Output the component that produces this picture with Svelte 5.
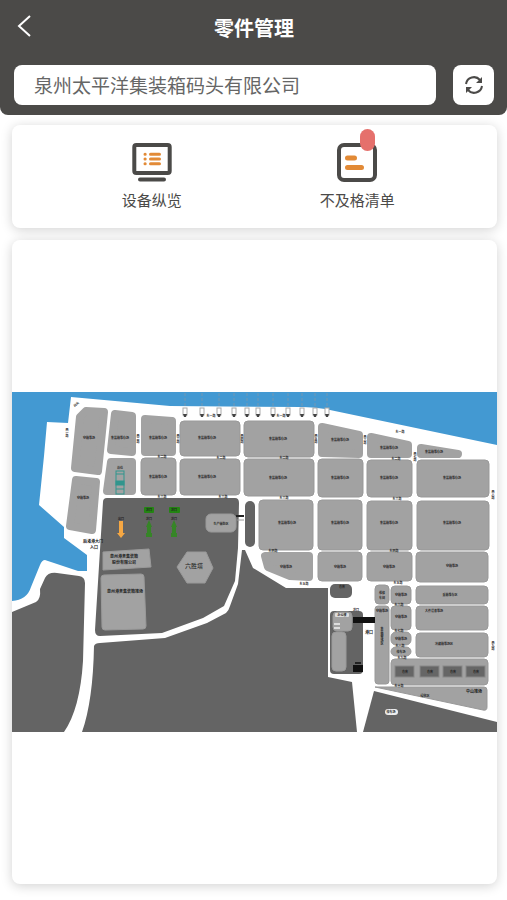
<script>
	let company = '泉州太平洋集装箱码头有限公司';

	// x, y, width, height, corner
	const yards = [
		[141, 457, 35, 37, 4],
		[180, 420, 60, 35, 4],
		[244, 420, 70, 36, 4],
		[180, 458, 60, 36, 4],
		[244, 458, 70, 37, 4],
		[318, 458, 45, 38, 4],
		[367, 459, 45, 37, 4],
		[417, 459, 72, 37, 4],
		[259, 499, 54, 50, 4],
		[318, 499, 44, 50, 4],
		[367, 500, 45, 49, 4],
		[417, 500, 72, 49, 4],
		[318, 551, 44, 29, 4],
		[367, 551, 45, 29, 4],
		[416, 551, 72, 30, 4],
		[375, 584, 14, 19, 4],
		[391, 585, 20, 18, 4],
		[416, 585, 72, 18, 4],
		[375, 605, 14, 78, 3],
		[391, 605, 20, 24, 4],
		[416, 605, 72, 24, 4],
		[391, 631, 20, 13, 5],
		[391, 646, 20, 9, 5],
		[416, 632, 72, 24, 4],
		[391, 658, 97, 26, 4],
		[206, 513, 30, 18, 5]
	];

	// drawn with a thick round stroke, so each lies inside its outline
	const corners = [
		'86,410 104,411 98,470 75,467 80,416',
		'115,413 132,415 132,451 111,449',
		'145,418 172,420 172,451 145,451',
		'111,461 132,461 132,490 107,490',
		'76,479 96,481 92,529 70,525',
		'322,426 359,434 359,453 322,452',
		'371,436 408,444 408,453 371,453',
		'421,447 458,453 421,453',
		'265,555 309,555 309,576 290,575 268,566'
	];

	const darkBoxes = [
		[245, 500, 10, 46, 5],
		[330, 583, 22, 14, 5],
		[330, 610, 33, 63, 4]
	];

	const sheds = [395, 420, 443, 466];
	const cranes = [185, 202, 219, 234, 247, 258, 273, 288, 302, 315, 327];

	const yardNames = [
		[89, 438, '空箱堆场'],
		[120, 438, '集装箱堆存场'],
		[158, 438, '集装箱堆存场'],
		[158, 477, '集装箱堆存场'],
		[83, 498, '空箱堆场'],
		[207, 438, '集装箱堆存场'],
		[278, 439, '集装箱堆存场'],
		[207, 477, '集装箱堆存场'],
		[278, 478, '集装箱堆存场'],
		[340, 440, '集装箱堆存场'],
		[389, 448, '集装箱堆存场'],
		[434, 452, '集装箱堆存场'],
		[340, 478, '集装箱堆存场'],
		[389, 478, '集装箱堆存场'],
		[452, 478, '集装箱堆存场'],
		[287, 523, '集装箱堆存场'],
		[340, 523, '集装箱堆存场'],
		[389, 523, '集装箱堆存场'],
		[452, 523, '集装箱堆存场'],
		[286, 567, '空箱堆场'],
		[340, 567, '空箱堆场'],
		[389, 567, '空箱堆场'],
		[452, 566, '空箱堆场'],
		[382, 593, '维修'],
		[382, 598, '车间'],
		[401, 595, '空箱堆场'],
		[450, 595, '重箱堆存区'],
		[382, 611, '空箱堆场'],
		[401, 617, '空箱堆场'],
		[434, 611, '大件设备堆场'],
		[401, 639, '空箱堆场'],
		[401, 652, '停车场'],
		[444, 644, '冷藏箱堆场区'],
		[425, 696, '绿化区'],
		[342, 587, '仓库'],
		[342, 615, '办公楼'],
		[221, 524, '生产辅助区'],
		[120, 468, '泊位'],
		[121, 519, '出口'],
		[149, 519, '进口'],
		[174, 519, '进口'],
		[391, 712, '停车场']
	];

	const roadNames = [
		[162, 457, '东二路'],
		[211, 416, '东一路'],
		[281, 416, '东一路'],
		[221, 458, '东二路'],
		[284, 458, '东二路'],
		[223, 497, '东三路'],
		[162, 497, '东三路'],
		[284, 498, '东三路'],
		[400, 432, '东一路'],
		[396, 459, '东二路'],
		[397, 499, '东三路'],
		[273, 551, '东四路'],
		[394, 551, '东四路'],
		[304, 584, '东五路'],
		[398, 583, '东五路'],
		[399, 605, '东六路'],
		[399, 631, '东七路'],
		[400, 646, '东八路'],
		[402, 658, '东九路'],
		[399, 686, '东十路']
	];

	const sideNames = [
		[67, 432, '西一路'],
		[138, 438, '西二路'],
		[178, 438, '西三路'],
		[242, 438, '西四路'],
		[316, 438, '西五路'],
		[365, 439, '西六路'],
		[415, 456, '西七路'],
		[493, 494, '西八路'],
		[493, 645, '西九路'],
		[382, 635, '集装箱堆场区']
	];
</script>

<div class="page">
	<header>
		<div class="title-bar">
			<button class="back" aria-label="返回">
				<svg viewBox="0 0 14 24" width="14" height="24">
					<path d="M13 2 L2 12 L13 22" fill="none" stroke="#fff" stroke-width="2" />
				</svg>
			</button>
			<h1>零件管理</h1>
		</div>
		<div class="search">
			<input type="text" aria-label="公司" bind:value={company} />
			<button class="refresh" aria-label="刷新">
				<svg viewBox="0 0 20 20" width="20" height="20">
					<g fill="none" stroke="#4b4a48" stroke-width="2">
						<path d="M2 9 A8 8 0 0 1 16 5" />
						<path d="M18 11 A8 8 0 0 1 4 15" />
					</g>
					<path d="M18 2 V8 H12 Z M2 18 V12 H8 Z" fill="#4b4a48" />
				</svg>
			</button>
		</div>
	</header>

	<main>
		<nav class="card">
			<button class="entry">
				<svg viewBox="0 0 40 40" width="40" height="40">
					<rect x="2.3" y="2" width="35.4" height="28" rx="2" fill="none" stroke="#4b4a48" stroke-width="4" />
					<path d="M8 36.5 H32" stroke="#4b4a48" stroke-width="4" stroke-linecap="round" />
					<g stroke="#e28a36" stroke-width="3" stroke-linecap="round">
						<path d="M13 11.2 H13.2 M18.5 11.2 H27.5" />
						<path d="M13 16 H13.2 M18.5 16 H27.5" />
						<path d="M13 20.8 H13.2 M18.5 20.8 H27.5" />
					</g>
				</svg>
				<span>设备纵览</span>
			</button>
			<button class="entry">
				<span class="icon">
					<svg viewBox="0 0 40 40" width="40" height="40">
						<rect x="2" y="2" width="36" height="35" rx="5" fill="none" stroke="#4b4a48" stroke-width="4" />
						<path d="M10.5 15 H17.5 M10.5 24.5 H24.5" stroke="#e28a36" stroke-width="5" stroke-linecap="round" />
					</svg>
					<i class="badge"></i>
				</span>
				<span>不及格清单</span>
			</button>
		</nav>

		<section class="card map">
			<svg viewBox="12 391 485 340" role="img" aria-label="码头平面图">
				<rect x="12" y="391" width="485" height="340" fill="#fff" />

				<!-- water -->
				<path class="water" d="M12 391 H497 V444 L330 409 Q322 407 303 406 L170 405 L71 396 L68 422 L47 421 L44 455 L39 504 L64 526 V537 L87 554 V570 L78 570 L45 559 Q42 559 40 564 L31 586 Q27 599 12 600 Z" />

				<!-- land outside the roads -->
				<path class="land" d="M12 611 L36 601 Q41 598 40 588 L45 577 Q48 571 57 572 L79 575 Q85 576 85 582 L83 660 Q80 708 64 731 H12 Z" />
				<path class="land" d="M82 731 Q93 700 94 645 Q95 642 100 642 L165 637 L207 622 L226 612 Q229 609 230 605 L238 583 L242 549 H245 L253 567 L286 587 H328 V676 L352 681 L357 731 Z" />
				<path class="land" d="M374 690 L497 721 V731 H363 Z" />
				<path class="land" d="M107 497 H235 Q239 497 239 502 L238 547 L235 580 L224 605 L203 617 L162 632 L100 635 Q95 635 95 629 L103 501 Q103 497 107 497 Z" />

				{#each corners as points}
					<polygon class="rounded" {points} />
				{/each}
				{#each yards as [x, y, width, height, r]}
					<rect class="yard" {x} {y} {width} {height} rx={r} />
				{/each}
				{#each darkBoxes as [x, y, width, height, r]}
					<rect class="land" {x} {y} {width} {height} rx={r} />
				{/each}
				<polygon class="yard" points="103,551 149,548 151,566 103,569" />
				<path class="yard" d="M104 574 L141 573 Q144 573 144 576 L146 625 Q146 628 143 628 L105 629 Q102 629 102 626 L101 577 Q101 574 104 574 Z" />
				<polygon class="yard" points="187,551 206,551 213,567 205,582 187,582 177,566" />
				<path class="yard" d="M375 686 H484 Q487 686 487 689 V706 Q487 710 483 709 Z" />

				<!-- gate -->
				<rect class="yard" x="333" y="611" width="19" height="19" rx="4" />
				<rect class="yard" x="332" y="631" width="14" height="39" rx="4" />
				<rect x="335" y="612" width="14" height="4" rx="1" fill="#ddd" />
				<path d="M334 623 H340 M334 627 H340" stroke="#ddd" stroke-width="2" />
				<path d="M353 616 H375 V622 H353 Z M353 664 H363 V671 H353 Z" fill="#111" />
				<path d="M236 515 H244 M355 662 H361" stroke="#222" stroke-width="2" />
				<path d="M237 519 H244" stroke="#999" />

				<!-- quay cranes -->
				{#each cranes as x}
					<path d="M{x} 392 V406" stroke="#7397b3" stroke-dasharray="3 2" />
					<rect x={x - 2} y="407" width="4" height="7" fill="#fff" stroke="#aaa" />
					<path d="M{x - 2} 413 H{x + 2} L{x + 1} 416 H{x - 1} Z" fill="#444" />
				{/each}
				<g fill="none" stroke="#31958d">
					<rect x="116" y="470" width="8" height="23" />
					<path d="M116 473 H124 M116 488 H124" />
					<rect x="116" y="480" width="8" height="4" fill="#31958d" />
				</g>

				<!-- lanes in and out -->
				<path d="M119 520 H123 V532 H125 L121 537 L117 532 H119 Z" fill="#f5a743" />
				<path d="M149 519 L152 526 H151 V532 H152 V536 H146 V532 H147 V526 H146 Z" fill="#368527" />
				<path d="M174 519 L177 526 H176 V532 H177 V536 H171 V532 H172 V526 H171 Z" fill="#368527" />
				<rect x="144" y="506" width="10" height="6" rx="1" fill="#238512" />
				<rect x="169" y="506" width="11" height="6" rx="1" fill="#238512" />

				{#each sheds as x}
					<rect {x} y="665" width="19" height="11" fill="#666" stroke="#888" />
					<text x={x + 10} y="672">仓库</text>
				{/each}
				<rect x="385" y="708" width="13" height="6" rx="3" fill="#eee" />

				{#each yardNames as [x, y, name]}
					<text {x} {y}>{name}</text>
				{/each}
				{#each roadNames as [x, y, name]}
					<text {x} {y}>{name}</text>
				{/each}
				{#each sideNames as [x, y, name]}
					<text class="vertical" {x} {y}>{name}</text>
				{/each}
				<text x="149" y="510">进口</text>
				<text x="174" y="510">进口</text>
				<text x="356" y="610">进口</text>
				<text class="medium" x="369" y="633">港口</text>
				<text x="77" y="404" transform="rotate(-40 77 404)">码头</text>
				<text class="medium" x="124" y="557">泉州港务集装箱</text>
				<text class="medium" x="124" y="563">股份有限公司</text>
				<text class="medium" x="125" y="592">泉州港务集装箱堆场</text>
				<text class="large" x="194" y="567">六胜塔</text>
				<text class="medium" x="93" y="542">后渚港大门</text>
				<text class="medium" x="94" y="548">入口</text>
				<text class="medium" x="474" y="692">中山堆场</text>
			</svg>
		</section>
	</main>
</div>

<style>
	:global(body) {
		background: #fff;
		font-family: "Noto Sans CJK SC", sans-serif;
		color: #4b4a48;
	}

	.page {
		min-height: 100vh;
		display: flex;
		flex-direction: column;
	}

	header {
		background: #4b4a48;
		border-radius: 0 0 8px 8px;
		padding: 0 13px 10px 14px;
	}

	.title-bar {
		height: 65px;
		display: grid;
		grid-template-columns: 24px 1fr 24px;
		align-items: start;
	}

	h1 {
		margin: 0;
		padding-top: 14px;
		text-align: center;
		font-size: 20px;
		line-height: 28px;
		font-weight: 700;
		color: #fff;
	}

	button {
		border: 0;
		padding: 0;
		background: none;
		font: inherit;
		color: inherit;
		cursor: pointer;
	}

	.back {
		display: flex;
		padding: 14px 0 0 3px;
	}

	.search {
		display: flex;
		gap: 17px;
	}

	input {
		flex: 1;
		min-width: 0;
		box-sizing: border-box;
		height: 40px;
		border: 0;
		border-radius: 8px;
		padding: 0 20px 2px;
		background: #fff;
		font: inherit;
		font-size: 19px;
		color: #666;
	}

	.refresh {
		width: 41px;
		height: 40px;
		border-radius: 8px;
		background: #fff;
		display: flex;
		align-items: center;
		justify-content: center;
	}

	main {
		flex: 1;
		display: flex;
		flex-direction: column;
		gap: 12px;
		padding: 10px 10px 16px 12px;
	}

	.card {
		background: #fff;
		border-radius: 8px;
		box-shadow: 0 2px 12px rgba(0, 0, 0, 0.18);
	}

	nav {
		display: grid;
		grid-template-columns: 1fr 1fr;
		padding: 18px 37px 16px;
	}

	.entry {
		display: flex;
		flex-direction: column;
		align-items: center;
		gap: 5px;
		font-size: 15px;
		line-height: 24px;
	}

	.entry svg {
		display: block;
	}

	.icon {
		position: relative;
	}

	.badge {
		position: absolute;
		top: -14px;
		right: 2px;
		width: 15px;
		height: 22px;
		border-radius: 8px;
		background: #e5706c;
	}

	.map {
		flex: 1;
		display: flex;
		align-items: center;
		overflow: hidden;
	}

	.map svg {
		display: block;
		width: 100%;
	}

	.water {
		fill: #4399d2;
	}

	.land {
		fill: #646464;
	}

	.yard {
		fill: #a2a2a2;
		stroke: #999;
	}

	.rounded {
		fill: #a2a2a2;
		stroke: #a2a2a2;
		stroke-width: 8px;
		stroke-linejoin: round;
	}

	text {
		font-size: 3px;
		font-weight: 700;
		text-anchor: middle;
		fill: #222;
	}

	.medium {
		font-size: 4px;
	}

	.large {
		font-size: 6px;
		font-weight: 400;
	}

	.vertical {
		writing-mode: vertical-rl;
	}
</style>
